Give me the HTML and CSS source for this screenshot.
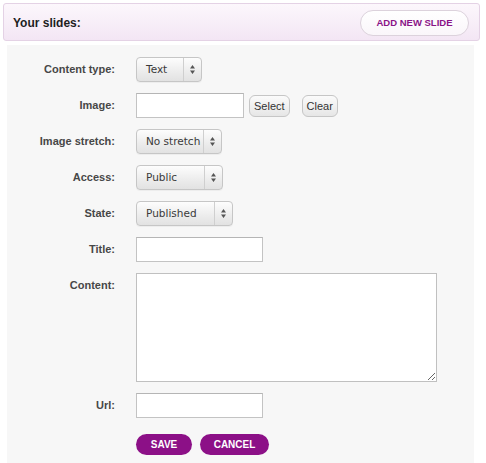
FILE: index.html
```html
<!DOCTYPE html>
<html>
<head>
<meta charset="utf-8">
<link rel="stylesheet" href="styles.css">
</head>
<body>
<div class="header">
  <span class="header-title">Your slides:</span>
  <button class="add-btn">ADD NEW SLIDE</button>
</div>
<div class="form">
  <div class="row">
    <label class="lbl">Content type:</label>
    <div class="ctl"><div class="select w-type"><span class="sel-text">Text</span><span class="sel-arrow"><svg width="5" height="9" viewBox="0 0 5 9"><path d="M0 3.5 L2.5 0 L5 3.5Z M0 5.5 L2.5 9 L5 5.5Z" fill="#555"/></svg></span></div></div>
  </div>
  <div class="row">
    <label class="lbl">Image:</label>
    <div class="ctl"><div class="input w-img"></div><button class="small-btn btn-select">Select</button><button class="small-btn">Clear</button></div>
  </div>
  <div class="row">
    <label class="lbl">Image stretch:</label>
    <div class="ctl"><div class="select w-stretch"><span class="sel-text">No stretch</span><span class="sel-arrow"><svg width="5" height="9" viewBox="0 0 5 9"><path d="M0 3.5 L2.5 0 L5 3.5Z M0 5.5 L2.5 9 L5 5.5Z" fill="#555"/></svg></span></div></div>
  </div>
  <div class="row">
    <label class="lbl">Access:</label>
    <div class="ctl"><div class="select w-access"><span class="sel-text">Public</span><span class="sel-arrow"><svg width="5" height="9" viewBox="0 0 5 9"><path d="M0 3.5 L2.5 0 L5 3.5Z M0 5.5 L2.5 9 L5 5.5Z" fill="#555"/></svg></span></div></div>
  </div>
  <div class="row">
    <label class="lbl">State:</label>
    <div class="ctl"><div class="select w-state"><span class="sel-text">Published</span><span class="sel-arrow"><svg width="5" height="9" viewBox="0 0 5 9"><path d="M0 3.5 L2.5 0 L5 3.5Z M0 5.5 L2.5 9 L5 5.5Z" fill="#555"/></svg></span></div></div>
  </div>
  <div class="row">
    <label class="lbl">Title:</label>
    <div class="ctl"><div class="input w-title"></div></div>
  </div>
  <div class="row">
    <label class="lbl">Content:</label>
    <div class="ctl"><textarea class="textarea"></textarea></div>
  </div>
  <div class="row">
    <label class="lbl">Url:</label>
    <div class="ctl"><div class="input w-title"></div></div>
  </div>
  <div class="row actions">
    <span class="lbl"></span>
    <div class="ctl"><button class="pill">SAVE</button><button class="pill cancel">CANCEL</button></div>
  </div>
</div>
</body>
</html>
```

FILE: styles.css
```css
html, body {
  margin: 0;
  padding: 0;
  background: #ffffff;
  font-family: "Liberation Sans", Arial, sans-serif;
}

.header {
  margin: 3px 6px 0 3px;
  height: 36px;
  border: 1px solid #e4d2e5;
  border-radius: 3px;
  background: linear-gradient(#fcf7fc, #f3e6f4);
  display: flex;
  align-items: center;
  justify-content: space-between;
  padding: 0 10px 0 9px;
}

.header-title {
  font-size: 12px;
  font-weight: bold;
  color: #1e1e1e;
  margin-top: 1px;
}

.add-btn {
  width: 109px;
  height: 26px;
  border-radius: 13px;
  border: 1px solid #dcd2dc;
  background: linear-gradient(#ffffff, #faf6fa);
  color: #8a1487;
  font-family: "Liberation Sans", Arial, sans-serif;
  font-weight: bold;
  font-size: 9.5px;
  padding: 0;
  margin-top: 1px;
}

.form {
  margin: 4px 12px 0 7px;
  background: #f7f7f7;
  padding: 12px 0 8px 0;
  display: flex;
  flex-direction: column;
  gap: 11px;
}

.row {
  display: flex;
  align-items: flex-start;
}

.actions {
  margin-top: 3px;
}

.lbl {
  width: 108px;
  flex: none;
  text-align: right;
  font-size: 11px;
  font-weight: bold;
  color: #474747;
  line-height: 25px;
  height: 25px;
  margin-right: 21px;
}

.ctl {
  display: flex;
  align-items: center;
  min-height: 25px;
}

.select {
  box-sizing: border-box;
  height: 25px;
  border: 1px solid #c6c6c6;
  border-radius: 4px;
  background: linear-gradient(#fdfdfd, #ececec 60%, #e2e2e2);
  display: flex;
  align-items: stretch;
  box-shadow: 0 1px 0 rgba(0,0,0,0.04);
}

.sel-text {
  flex: 1;
  padding-left: 9px;
  font-family: "DejaVu Sans", sans-serif;
  font-size: 10.5px;
  color: #3a3a3a;
  line-height: 23px;
  white-space: nowrap;
}

.sel-arrow {
  width: 17px;
  border-left: 1px solid #cfcfcf;
  display: flex;
  align-items: center;
  justify-content: center;
}

.w-type { width: 66px; }
.w-stretch { width: 86px; }
.w-access { width: 87px; }
.w-state { width: 97px; }

.input {
  box-sizing: border-box;
  height: 25px;
  background: #fff;
  border: 1px solid #c3c3c3;
  border-top-color: #b5b5b5;
}

.w-img { width: 108px; }
.w-title { width: 127px; }

.small-btn {
  box-sizing: border-box;
  height: 22px;
  padding: 0 4px;
  border: 1px solid #c6c6c6;
  border-radius: 6px;
  background: linear-gradient(#fbfbfb, #e6e6e6);
  font-family: "Liberation Sans", Arial, sans-serif;
  font-size: 11px;
  color: #333;
}

.btn-select {
  margin-left: 5px;
  margin-right: 12px;
}

.textarea {
  box-sizing: border-box;
  width: 301px;
  height: 109px;
  background: #fff;
  border: 1px solid #c0c0c0;
  border-radius: 0;
  margin: 0;
  display: block;
}

.pill {
  box-sizing: border-box;
  height: 21px;
  border: none;
  border-radius: 11px;
  background: #8c1087;
  color: #fff;
  font-family: "Liberation Sans", Arial, sans-serif;
  font-weight: bold;
  font-size: 10px;
  width: 56px;
  padding: 0;
}

.cancel {
  width: 69px;
  margin-left: 8px;
}
```
